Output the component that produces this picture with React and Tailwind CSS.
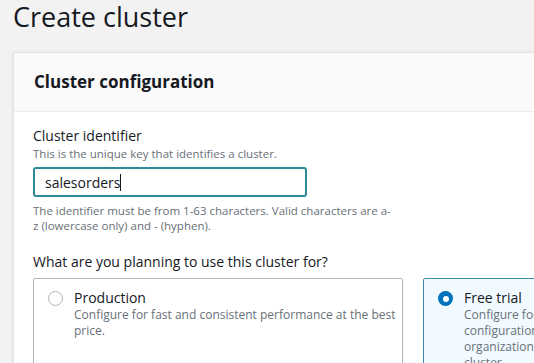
import React from "react";

const RadioCard = ({ title, lines, selected }) => {
  return (
    <div
      className={`flex shrink-0 w-[370px] h-[110px] rounded-[2px] border pl-[14px] pr-[10px] pt-[10px] ${
        selected ? "border-[#3a8fb0] bg-[#f1faff]" : "border-[#aab7b8] bg-white"
      }`}
    >
      <div className="pt-[2px]">
        {selected ? (
          <div className="w-[15px] h-[15px] rounded-full bg-[#0073bb] flex items-center justify-center">
            <div className="w-[6px] h-[6px] rounded-full bg-white" />
          </div>
        ) : (
          <div className="w-[15px] h-[15px] rounded-full border border-[#aab7b8] bg-white" />
        )}
      </div>
      <div className="ml-[11px]">
        <div className="text-[14px] leading-[18px] text-[#16191f]">{title}</div>
        <div className="text-[12px] leading-[16px] text-[#687078] whitespace-nowrap">
          {lines.map((line, i) => (
            <div key={i}>{line}</div>
          ))}
        </div>
      </div>
    </div>
  );
};

const App = () => {
  return (
    <div
      className="w-[534px] h-[363px] overflow-hidden bg-[#f2f2f2] text-[#16191f]"
      style={{ fontFamily: '"Open Sans", "Noto Sans", sans-serif' }}
    >
      <h1 className="pl-[13px] h-[34px] text-[27px] leading-[34px] font-normal text-[#16191f]">
        Create cluster
      </h1>
      <div className="ml-[13px] mt-[18px] border-l border-t border-[#e3e3e3] bg-white shadow-sm">
        <div className="h-[59px] bg-[#fafafa] border-b border-[#eaeded] pl-[20px] flex items-center">
          <h2 className="text-[17px] font-bold leading-[22px]">Cluster configuration</h2>
        </div>
        <div className="pl-[19px] pt-[15px] pb-[20px]">
          <label className="block text-[14px] leading-[18px]">Cluster identifier</label>
          <div className="text-[11.5px] leading-[16px] text-[#687078] mt-[1px]">
            This is the unique key that identifies a cluster.
          </div>
          <div className="mt-[5px] w-[274px] h-[30px] rounded-[3px] border-2 border-[#2f8a9c] flex items-center pl-[10px] text-[14px]">
            salesorders
            <span className="inline-block w-[1px] h-[17px] bg-[#16191f]" />
          </div>
          <div className="mt-[6px] w-[362px] text-[11.5px] leading-[15px] text-[#687078]">
            The identifier must be from 1-63 characters. Valid characters are a-z (lowercase only) and - (hyphen).
          </div>
          <div className="mt-[20px] text-[14px] leading-[18px]">
            What are you planning to use this cluster for?
          </div>
          <div className="mt-[7px] flex gap-[20px]">
            <RadioCard
              title="Production"
              lines={["Configure for fast and consistent performance at the best", "price."]}
            />
            <RadioCard
              selected
              title="Free trial"
              lines={[
                "Configure for learning about Amazon Redshift. This",
                "configuration is free for a limited time if your",
                "organization has never created an Amazon Redshift",
                "cluster.",
              ]}
            />
          </div>
        </div>
      </div>
    </div>
  );
};

export default App;
